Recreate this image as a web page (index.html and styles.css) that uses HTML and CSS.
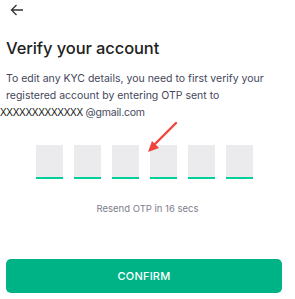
FILE: index.html
```html
<!DOCTYPE html>
<html lang="en"><head>
<meta charset="utf-8">
<title>Verify your account</title>
<link rel="stylesheet" href="styles.css">
</head>
<body>
<div class="page">
  <div class="topbar">
    <svg class="back" width="14" height="12" viewBox="0 0 14 12"><path d="M13 6H1.5M6.5 1L1.5 6l5 5" fill="none" stroke="#333" stroke-width="1.3"/></svg>
  </div>
  <h1 class="title">Verify your account</h1>
  <p class="desc">To edit any KYC details, you need to first verify your<br>registered account by entering OTP sent to</p>
  <p class="mail"><span class="masked">XXXXXXXXXXXXX</span> @gmail.com</p>
  <div class="otp">
    <div class="box"></div>
    <div class="box"></div>
    <div class="box"></div>
    <div class="box"></div>
    <div class="box"></div>
    <div class="box"></div>
    <svg class="pointer" width="34" height="34" viewBox="0 0 34 34"><path d="M31 2L7 26" stroke="#f2443f" stroke-width="2.4" stroke-linecap="round"/><path d="M3 31l4-11 7 7z" fill="#f2443f"/></svg>
  </div>
  <p class="resend">Resend OTP in 16 secs</p>
  <button class="confirm">CONFIRM</button>
</div>
</body></html>
```
FILE: styles.css
```css
body{ margin:0; background:#fff; font-family:Inter, "Noto Sans", sans-serif; }
.page{ display:flex; flex-direction:column; height:299px; }
.topbar{ height:22px; padding:4px 0 0 10px; }
.back{ display:block; }
.title{ margin:12px 0 0 6px; font-size:16.5px; font-weight:500; color:#222; letter-spacing:-0.1px; }
.desc{ margin:12px 0 0 6px; font-size:10.5px; line-height:17px; color:#44475b; }
.mail{ margin:0; font-size:10.5px; line-height:17px; color:#44475b; letter-spacing:-0.2px; }
.masked{ font-family:"Liberation Sans", sans-serif; font-size:10px; color:#111; letter-spacing:-0.3px; }
.otp{ position:relative; display:flex; gap:11px; margin:24px 0 0 36px; }
.box{ width:27px; height:32px; background:#ebebed; border-bottom:2px solid #00d09c; }
.pointer{ position:absolute; left:109px; top:-24px; }
.resend{ margin:24px 0 0; text-align:center; font-size:9.5px; color:#7c7e8c; }
.confirm{ margin:auto 13px 6px 6px; height:34px; border:0; border-radius:5px; background:#00b386; color:#fff; font-family:inherit; font-size:11px; font-weight:500; letter-spacing:0.2px; }
```
